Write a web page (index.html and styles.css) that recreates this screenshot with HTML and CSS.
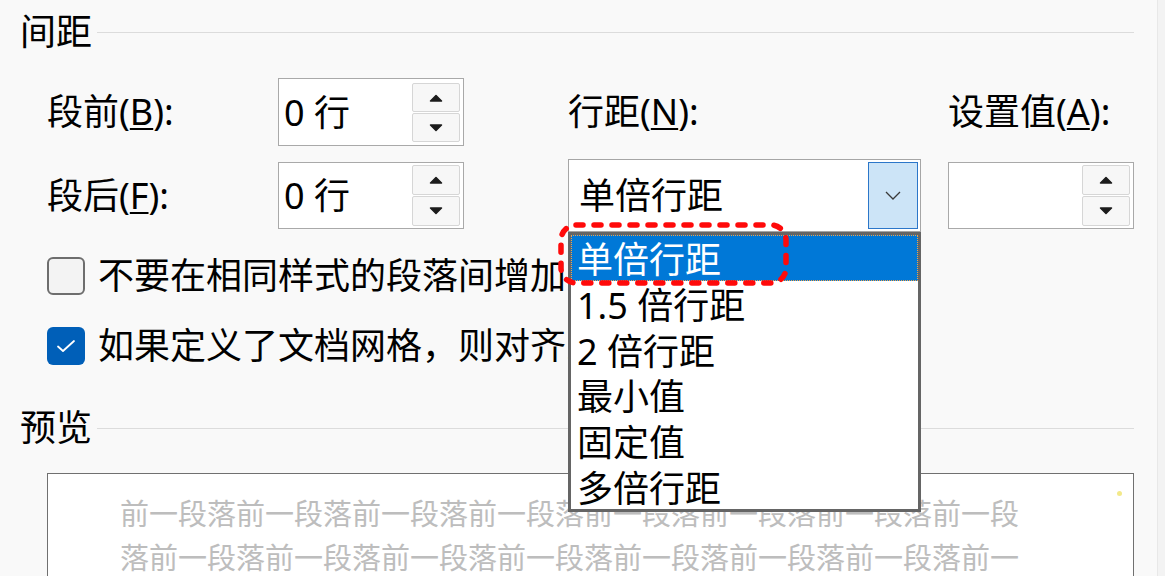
FILE: index.html
```html
<!DOCTYPE html>
<html lang="zh-CN">
<head>
<meta charset="utf-8">
<title>段落 - 间距</title>
<link rel="stylesheet" href="styles.css">
</head>
<body>
<div class="window">
  <main class="dialog">
    <div class="group-title"><span class="group-name">间距</span><span class="rule"></span></div>

    <div class="spacing">
      <label class="lbl c1 r1">段前(<u>B</u>):</label>
      <div class="spin c2 r1">
        <span class="val">0 行</span>
        <div class="spin-btns">
          <span class="sb"><svg width="16" height="10" viewBox="0 0 16 10"><path d="M2.5 8 L8 2.5 L13.5 8 Z" class="tri"/></svg></span>
          <span class="sb"><svg width="16" height="10" viewBox="0 0 16 10"><path d="M2.5 2 L8 7.5 L13.5 2 Z" class="tri"/></svg></span>
        </div>
      </div>
      <label class="lbl c4 r1">行距(<u>N</u>):</label>
      <label class="lbl c6 r1">设置值(<u>A</u>):</label>

      <label class="lbl c1 r2">段后(<u>F</u>):</label>
      <div class="spin short c2 r2">
        <span class="val">0 行</span>
        <div class="spin-btns">
          <span class="sb"><svg width="16" height="10" viewBox="0 0 16 10"><path d="M2.5 8 L8 2.5 L13.5 8 Z" class="tri"/></svg></span>
          <span class="sb"><svg width="16" height="10" viewBox="0 0 16 10"><path d="M2.5 2 L8 7.5 L13.5 2 Z" class="tri"/></svg></span>
        </div>
      </div>
      <div class="combo-wrap c4 r2">
        <div class="combo">
          <span class="combo-val">单倍行距</span>
          <span class="drop-btn"><svg width="16" height="9" viewBox="0 0 16 9"><polyline points="1,1 8,8 15,1" class="chev"/></svg></span>
        </div>
        <ul class="list">
          <li class="item selected">单倍行距</li>
          <li class="item">1.5 倍行距</li>
          <li class="item">2 倍行距</li>
          <li class="item">最小值</li>
          <li class="item">固定值</li>
          <li class="item">多倍行距</li>
        </ul>
        <svg class="mark" width="232" height="65" viewBox="0 0 232 65"><rect x="3" y="3" width="225" height="58" rx="15" ry="15" class="mark-rect"/></svg>
      </div>
      <div class="spin short c6 r2">
        <span class="val"></span>
        <div class="spin-btns">
          <span class="sb"><svg width="16" height="10" viewBox="0 0 16 10"><path d="M2.5 8 L8 2.5 L13.5 8 Z" class="tri"/></svg></span>
          <span class="sb"><svg width="16" height="10" viewBox="0 0 16 10"><path d="M2.5 2 L8 7.5 L13.5 2 Z" class="tri"/></svg></span>
        </div>
      </div>
    </div>

    <div class="options">
      <div class="opt">
        <span class="check"></span>
        <span class="opt-text">不要在相同样式的段落间增加间距(<u>C</u>)</span>
      </div>
      <div class="opt">
        <span class="check on"><svg width="20" height="14" viewBox="0 0 20 14"><polyline points="2,7.5 7,12 18,2" class="tick"/></svg></span>
        <span class="opt-text">如果定义了文档网格，则对齐到网格(<u>W</u>)</span>
      </div>
    </div>

    <div class="group-title preview-title"><span class="group-name">预览</span><span class="rule"></span></div>

    <div class="preview">
      <p class="preview-text">前一段落前一段落前一段落前一段落前一段落前一段落前一段落前一段落前一段落前一段落前一段落前一段落前一段落前一段落前一段落前一段落</p>
      <span class="dot"></span>
    </div>
  </main>
  <div class="edge"></div>
</div>
</body>
</html>
```

FILE: styles.css
```css
html, body {
  margin: 0;
  padding: 0;
  height: 100%;
  overflow: hidden;
}

body {
  background: #f9f9f9;
  color: #000;
  font-family: "Noto Sans", "Noto Sans CJK SC", sans-serif;
  font-size: 36px;
}

.window {
  display: grid;
  grid-template-columns: 1fr 8px;
  height: 100vh;
}

.edge {
  background: #f3f3f3;
  border-left: 1px solid #e8e8e8;
}

.dialog {
  padding: 0 23px 0 20px;
  min-width: 0;
}

.group-title {
  display: flex;
  align-items: center;
  height: 64px;
}

.group-name {
  line-height: 64px;
  white-space: nowrap;
}

.rule {
  flex: 1;
  height: 1px;
  background: #dcdcdc;
  margin-left: 5px;
}

u {
  text-decoration: underline;
  text-decoration-thickness: 2px;
  text-underline-offset: 3px;
}

/* spacing grid */
.spacing {
  display: grid;
  grid-template-columns: 231px 186px 104px 353px 27px 186px;
  grid-template-rows: 68px 73px;
  row-gap: 13px;
  align-items: center;
  margin: 14px 0 0 27px;
}

.c1 { grid-column: 1; }
.c2 { grid-column: 2; }
.c4 { grid-column: 4; }
.c6 { grid-column: 6; }
.r1 { grid-row: 1; }
.r2 { grid-row: 2; }

.lbl {
  white-space: nowrap;
  line-height: 48px;
}

.spin {
  box-sizing: border-box;
  height: 68px;
  border: 1px solid #a9a9a9;
  background: #fff;
  display: flex;
  align-items: center;
  justify-content: space-between;
  padding: 4px 3px 3px 5px;
}

.spin.short {
  height: 67px;
  padding: 2px 3px 2px 5px;
}

.val {
  white-space: nowrap;
  line-height: 48px;
}

.spin-btns {
  display: flex;
  flex-direction: column;
  gap: 1px;
  align-self: stretch;
}

.sb {
  flex: 1;
  width: 48px;
  box-sizing: border-box;
  border: 1px solid #d6d6d6;
  border-radius: 2px;
  background: #f7f7f7;
  display: flex;
  align-items: center;
  justify-content: center;
}

.tri {
  fill: #1c1c1c;
  stroke: #1c1c1c;
  stroke-width: 1.5;
  stroke-linejoin: round;
}

/* combo box */
.combo-wrap {
  position: relative;
  height: 73px;
}

.combo {
  box-sizing: border-box;
  height: 73px;
  border: 1px solid #a6a6a6;
  background: #fff;
  display: flex;
  align-items: center;
  justify-content: space-between;
  padding: 2px 2px 2px 10px;
}

.combo-val {
  white-space: nowrap;
  line-height: 48px;
}

.drop-btn {
  box-sizing: border-box;
  width: 50px;
  align-self: stretch;
  background: #cce4f7;
  border: 1px solid #2b76c9;
  display: flex;
  align-items: center;
  justify-content: center;
}

.chev {
  fill: none;
  stroke: #3a3a3a;
  stroke-width: 1.3;
}

.list {
  position: absolute;
  top: 100%;
  left: 0;
  width: 353px;
  box-sizing: border-box;
  margin: 0;
  padding: 0;
  list-style: none;
  background: #fff;
  border: 3px solid #656565;
  z-index: 3;
}

.item {
  height: 45.66px;
  display: flex;
  align-items: center;
  padding-left: 6px;
  white-space: nowrap;
}

.item.selected {
  background: #0078d7;
  color: #fff;
  outline: 1px dotted #f2a24a;
  outline-offset: -1px;
}

.mark {
  position: absolute;
  left: -10px;
  top: 63px;
  z-index: 4;
  overflow: visible;
}

.mark-rect {
  fill: none;
  stroke: #ff0a0a;
  stroke-width: 5.5;
  stroke-dasharray: 7 11;
  stroke-linecap: round;
}

/* options */
.options {
  margin: 20px 0 0 27px;
  display: flex;
  flex-direction: column;
  gap: 22px;
}

.opt {
  display: flex;
  align-items: center;
  gap: 13px;
  height: 48px;
  white-space: nowrap;
}

.check {
  box-sizing: border-box;
  width: 38px;
  height: 38px;
  flex: none;
  border: 2px solid #6e6e6e;
  border-radius: 6px;
  background: #f3f3f3;
  display: flex;
  align-items: center;
  justify-content: center;
}

.check.on {
  border: none;
  background: #005fb8;
}

.tick {
  fill: none;
  stroke: #fff;
  stroke-width: 1.8;
  stroke-linecap: round;
  stroke-linejoin: round;
}

.opt-text {
  line-height: 48px;
}

/* preview */
.preview-title {
  margin-top: 26px;
}

.preview {
  position: relative;
  margin: 13px 0 0 27px;
  height: 200px;
  border: 1px solid #707070;
  background: #fff;
  padding: 16px 0 0 72px;
}

.preview-text {
  margin: 0;
  width: 31.2em;
  font-size: 29px;
  line-height: 44px;
  color: #bdbdbd;
  font-family: "Noto Sans CJK SC", sans-serif;
}

.dot {
  position: absolute;
  left: 1069px;
  top: 17px;
  width: 5px;
  height: 5px;
  border-radius: 50%;
  background: #f3e98a;
}
```
